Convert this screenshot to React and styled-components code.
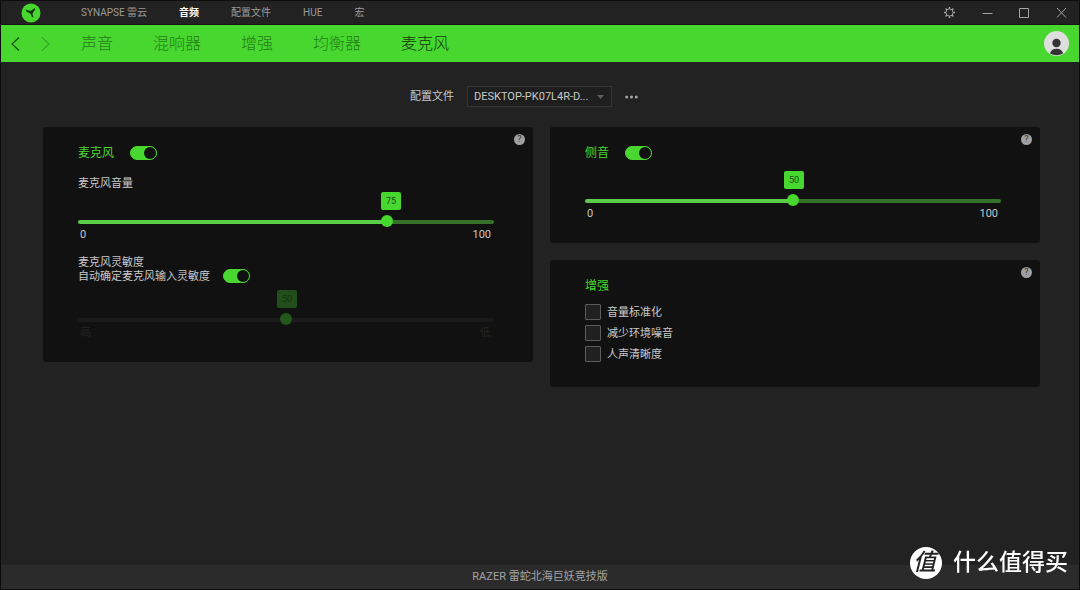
import React, { useState } from "react";
import styled, { createGlobalStyle, css } from "styled-components";

const GREEN = "#47d72f";

const GlobalStyle = createGlobalStyle`
    * {
        box-sizing: border-box;
    }
    body {
        margin: 0;
        background: #222;
        color: #c9c9c9;
        font-family: Roboto, "Noto Sans CJK SC", sans-serif;
        font-size: 11px;
        line-height: 13px;
    }
    button, input, select {
        font: inherit;
        color: inherit;
        margin: 0;
    }
    a {
        color: inherit;
        text-decoration: none;
    }
`

const Window = styled.div`
    display: flex;
    flex-direction: column;
    min-height: 100vh;
    border: 1px solid #0c0c0c;
`

const TitleBar = styled.header`
    display: flex;
    align-items: center;
    height: 24px;
    padding: 0 12px 0 20px;
    border-bottom: 1px solid #151515;
`

const TopMenu = styled.nav`
    display: flex;
    flex: 1;
    gap: 32px;
    margin-left: 40px;
    font-size: 10px;
`

const TopLink = styled.a`
    color: ${props => props.$active ? "#fff" : "#9b9b9b"};
    font-weight: ${props => props.$active ? 700 : 400};
`

const WindowButtons = styled.div`
    display: flex;
    gap: 26px;
`

const IconButton = styled.button`
    display: flex;
    align-items: center;
    justify-content: center;
    padding: 0;
    border: 0;
    background: none;
    color: ${props => props.$color || "#a5a5a5"};
    cursor: pointer;
`

const TabBar = styled.div`
    display: flex;
    align-items: center;
    height: 37px;
    padding: 0 10px 0 10px;
    background: ${GREEN};
`

const Arrows = styled.div`
    display: flex;
    gap: 21px;
`

const Tabs = styled.nav`
    display: flex;
    flex: 1;
    gap: 40px;
    margin-left: 31px;
    font-size: 16px;
    line-height: 20px;
`

const Tab = styled.a`
    color: ${props => props.$active ? "#12370c" : "#258019"};
    font-weight: 300;
`

const Content = styled.main`
    flex: 1;
    padding: 24px 39px 24px 42px;
`

const ProfileRow = styled.div`
    display: flex;
    align-items: center;
    justify-content: center;
    gap: 13px;
    padding-right: 35px;
    margin-bottom: 20px;
`

const SelectBox = styled.div`
    position: relative;
    width: 145px;
    svg {
        position: absolute;
        top: 9px;
        right: 8px;
        pointer-events: none;
    }
`

const Select = styled.select`
    display: block;
    appearance: none;
    width: 100%;
    height: 21px;
    padding: 0 20px 0 6px;
    border: 1px solid #353535;
    border-radius: 0;
    background: #1e1e1e;
`

const Columns = styled.div`
    display: grid;
    grid-template-columns: 1fr 1fr;
    align-items: start;
    gap: 17px;
`

const Column = styled.div`
    display: grid;
    gap: 17px;
`

const PanelBox = styled.section`
    position: relative;
    padding: 19px 39px 23px 35px;
    border-radius: 3px;
    background: #111;
`

const HelpButton = styled.button`
    position: absolute;
    top: 7px;
    right: 8px;
    width: 11px;
    height: 11px;
    padding: 0;
    border: 0;
    border-radius: 50%;
    background: #a0a0a0;
    color: #333;
    font-size: 9px;
    line-height: 11px;
    text-align: center;
`

const PanelHead = styled.div`
    display: flex;
    align-items: center;
    gap: 16px;
    height: 14px;
`

const PanelTitle = styled.h2`
    margin: 0;
    color: ${GREEN};
    font-size: 12px;
    font-weight: 400;
    line-height: 14px;
`

const Switch = styled.input`
    appearance: none;
    flex: none;
    display: flex;
    justify-content: flex-start;
    width: 27px;
    height: 14px;
    border: 1px solid #777;
    border-radius: 7px;
    background: #333;
    cursor: pointer;
    &::before {
        content: "";
        width: 12px;
        height: 12px;
        border-radius: 50%;
        background: #111;
    }
    &:checked {
        justify-content: flex-end;
        border-color: ${GREEN};
        background: ${GREEN};
    }
`

const FieldLabel = styled.div`
    margin-top: ${props => props.$gap}px;
`

const SwitchRow = styled.div`
    display: flex;
    align-items: center;
    gap: 13px;
    height: 14px;
`

const SliderBox = styled.div`
    position: relative;
    margin-top: ${props => props.$gap}px;
    padding-top: 24px;
`

const ValueTip = styled.output`
    position: absolute;
    top: 0;
    width: 20px;
    height: 18px;
    margin-left: -9px;
    border-radius: 2px;
    background: ${props => props.$off ? "#214f1a" : GREEN};
    color: ${props => props.$off ? "#12350c" : "#17500f"};
    font-size: 9px;
    line-height: 19px;
    text-align: center;
`

const trackOn = css`
    background: linear-gradient(to right, #59cd45 var(--fill), #357129 var(--fill));
`

const trackOff = css`
    background: #1a1a1a;
`

const Range = styled.input`
    appearance: none;
    display: block;
    width: 100%;
    height: 12px;
    background: none;
    &::-webkit-slider-runnable-track {
        height: 4px;
        border-radius: 2px;
        ${props => props.disabled ? trackOff : trackOn}
    }
    &::-webkit-slider-thumb {
        appearance: none;
        width: 12px;
        height: 12px;
        margin-top: -5px;
        border-radius: 50%;
        background: ${props => props.disabled ? "#22591a" : GREEN};
    }
`

const Ends = styled.div`
    display: flex;
    justify-content: space-between;
    padding: 0 3px 0 2px;
    color: ${props => props.$off ? "#222" : "inherit"};
`

const CheckList = styled.div`
    display: grid;
    justify-items: start;
    gap: 5px;
    margin: 11px 0 2px;
`

const CheckLabel = styled.label`
    display: flex;
    align-items: center;
    gap: 6px;
    height: 16px;
`

const CheckBox = styled.input`
    appearance: none;
    width: 16px;
    height: 16px;
    border: 1px solid #5c5c5c;
    border-radius: 1px;
    background: #202020;
    &:checked {
        background: ${GREEN};
    }
`

const Footer = styled.footer`
    height: 24px;
    background: #2b2b2b;
    color: #a3a3a3;
    line-height: 24px;
    text-align: center;
`

const Watermark = styled.div`
    position: fixed;
    right: 12px;
    bottom: 11px;
    display: flex;
    align-items: center;
    gap: 11px;
    color: #fff;
    font-size: 23px;
    font-weight: 500;
    line-height: 32px;
`

const Seal = styled.span`
    width: 32px;
    height: 32px;
    padding-right: 3px;
    border-radius: 50%;
    background: #fff;
    color: #222;
    font-style: italic;
    text-align: center;
`

function Logo() {
    return (
        <svg width="20" height="20" viewBox="0 0 20 20">
            <circle cx="10" cy="10" r="9.5" fill={GREEN} />
            <path d="M4.4 6.6 L7.6 7.4 Q9.8 8 11.2 7 L14.2 4.8 Q14.300 7.600 12.200 9.200 Q11.200 10.100 11.700 11.700 L12.600 14.600 Q10 13.900 9.700 11.500 Q9.500 10 8 9.700 Q5.200 9.200 4.400 6.600 Z" fill="#14300f" />
        </svg>
    );
}

function Gear() {
    const teeth = [0, 45, 90, 135, 180, 225, 270, 315];
    return (
        <svg width="13" height="13" viewBox="0 0 13 13" fill="none" stroke="currentColor">
            <circle cx="6.5" cy="6.5" r="3.6" />
            {teeth.map(a => <path key={a} d="M6.5 2.8V1" strokeWidth="1.4" transform={`rotate(${a} 6.5 6.5)`} />)}
        </svg>
    );
}

function Slider({ label, start, min, max, gap, off }) {
    const [value, setValue] = useState(start);
    return (
        <SliderBox $gap={gap}>
            <ValueTip $off={off} style={{ left: value + "%" }}>{value}</ValueTip>
            <Range
                type="range"
                aria-label={label}
                value={value}
                disabled={off}
                onChange={e => setValue(Number(e.target.value))}
                style={{ "--fill": value + "%" }}
            />
            <Ends $off={off}><span>{min}</span><span>{max}</span></Ends>
        </SliderBox>
    );
}

function Panel({ children }) {
    return (
        <PanelBox>
            <HelpButton aria-label="?">?</HelpButton>
            {children}
        </PanelBox>
    );
}

const topLinks = ["SYNAPSE 雷云", "音频", "配置文件", "HUE", "宏"];
const tabs = ["声音", "混响器", "增强", "均衡器", "麦克风"];
const enhancements = ["音量标准化", "减少环境噪音", "人声清晰度"];

function App() {
    return (
        <>
        <GlobalStyle />
        <Window>
            <TitleBar>
                <Logo />
                <TopMenu>
                    {topLinks.map(name => <TopLink key={name} href="#" $active={name === "音频"}>{name}</TopLink>)}
                </TopMenu>
                <WindowButtons>
                    <IconButton aria-label="设置"><Gear /></IconButton>
                    <IconButton aria-label="最小化">
                        <svg width="11" height="11" viewBox="0 0 11 11" stroke="currentColor"><path d="M0.5 6.5h10" /></svg>
                    </IconButton>
                    <IconButton aria-label="最大化">
                        <svg width="11" height="11" viewBox="0 0 11 11" fill="none" stroke="currentColor"><path d="M0.5 1.5h9v9h-9z" /></svg>
                    </IconButton>
                    <IconButton aria-label="关闭">
                        <svg width="11" height="11" viewBox="0 0 11 11" stroke="currentColor"><path d="M1 1l9 9.5M10 1L1 10.5" /></svg>
                    </IconButton>
                </WindowButtons>
            </TitleBar>
            <TabBar>
                <Arrows>
                    <IconButton aria-label="后退" $color="#17500f">
                        <svg width="9" height="14" viewBox="0 0 9 14" fill="none" stroke="currentColor" strokeWidth="1.2"><path d="M8 0.5L1 7l7 6.5" /></svg>
                    </IconButton>
                    <IconButton aria-label="前进" $color="#36a825">
                        <svg width="9" height="14" viewBox="0 0 9 14" fill="none" stroke="currentColor" strokeWidth="1.2"><path d="M1 0.5L8 7l-7 6.5" /></svg>
                    </IconButton>
                </Arrows>
                <Tabs>
                    {tabs.map(name => <Tab key={name} href="#" $active={name === "麦克风"}>{name}</Tab>)}
                </Tabs>
                <IconButton aria-label="账户">
                    <svg width="25" height="25" viewBox="0 0 25 25">
                        <circle cx="12.5" cy="12.5" r="12.5" fill="#dedede" />
                        <circle cx="12.5" cy="12" r="4.2" fill="#333" />
                        <path d="M6 22.5q1-4.700 6.500-4.700t6.500 4.700q-6.500 3.500-13 0z" fill="#333" />
                    </svg>
                </IconButton>
            </TabBar>
            <Content>
                <ProfileRow>
                    <label htmlFor="profile">配置文件</label>
                    <SelectBox>
                        <Select id="profile">
                            <option>DESKTOP-PK07L4R-D...</option>
                        </Select>
                        <svg width="7" height="4" viewBox="0 0 7 4" fill="#5f5f5f"><path d="M0 0h7L3.5 4z" /></svg>
                    </SelectBox>
                    <IconButton aria-label="更多">
                        <svg width="13" height="4" viewBox="0 0 13 4" fill="currentColor">
                            <circle cx="1.700" cy="2" r="1.500" /><circle cx="6.500" cy="2" r="1.500" /><circle cx="11.300" cy="2" r="1.500" />
                        </svg>
                    </IconButton>
                </ProfileRow>
                <Columns>
                    <Panel>
                        <PanelHead>
                            <PanelTitle>麦克风</PanelTitle>
                            <Switch type="checkbox" role="switch" aria-label="麦克风" defaultChecked />
                        </PanelHead>
                        <FieldLabel $gap={17}>麦克风音量</FieldLabel>
                        <Slider label="麦克风音量" start={75} min="0" max="100" gap={2} />
                        <FieldLabel $gap={15}>麦克风灵敏度</FieldLabel>
                        <SwitchRow>
                            <label htmlFor="auto">自动确定麦克风输入灵敏度</label>
                            <Switch id="auto" type="checkbox" role="switch" defaultChecked />
                        </SwitchRow>
                        <Slider label="麦克风灵敏度" start={50} min="高" max="低" gap={7} off />
                    </Panel>
                    <Column>
                        <Panel>
                            <PanelHead>
                                <PanelTitle>侧音</PanelTitle>
                                <Switch type="checkbox" role="switch" aria-label="侧音" defaultChecked />
                            </PanelHead>
                            <Slider label="侧音" start={50} min="0" max="100" gap={11} />
                        </Panel>
                        <Panel>
                            <PanelHead>
                                <PanelTitle>增强</PanelTitle>
                            </PanelHead>
                            <CheckList>
                                {enhancements.map(name => (
                                    <CheckLabel key={name}><CheckBox type="checkbox" />{name}</CheckLabel>
                                ))}
                            </CheckList>
                        </Panel>
                    </Column>
                </Columns>
            </Content>
            <Footer>RAZER 雷蛇北海巨妖竞技版</Footer>
        </Window>
        <Watermark><Seal>值</Seal>什么值得买</Watermark>
        </>
    );
}

export default App;
